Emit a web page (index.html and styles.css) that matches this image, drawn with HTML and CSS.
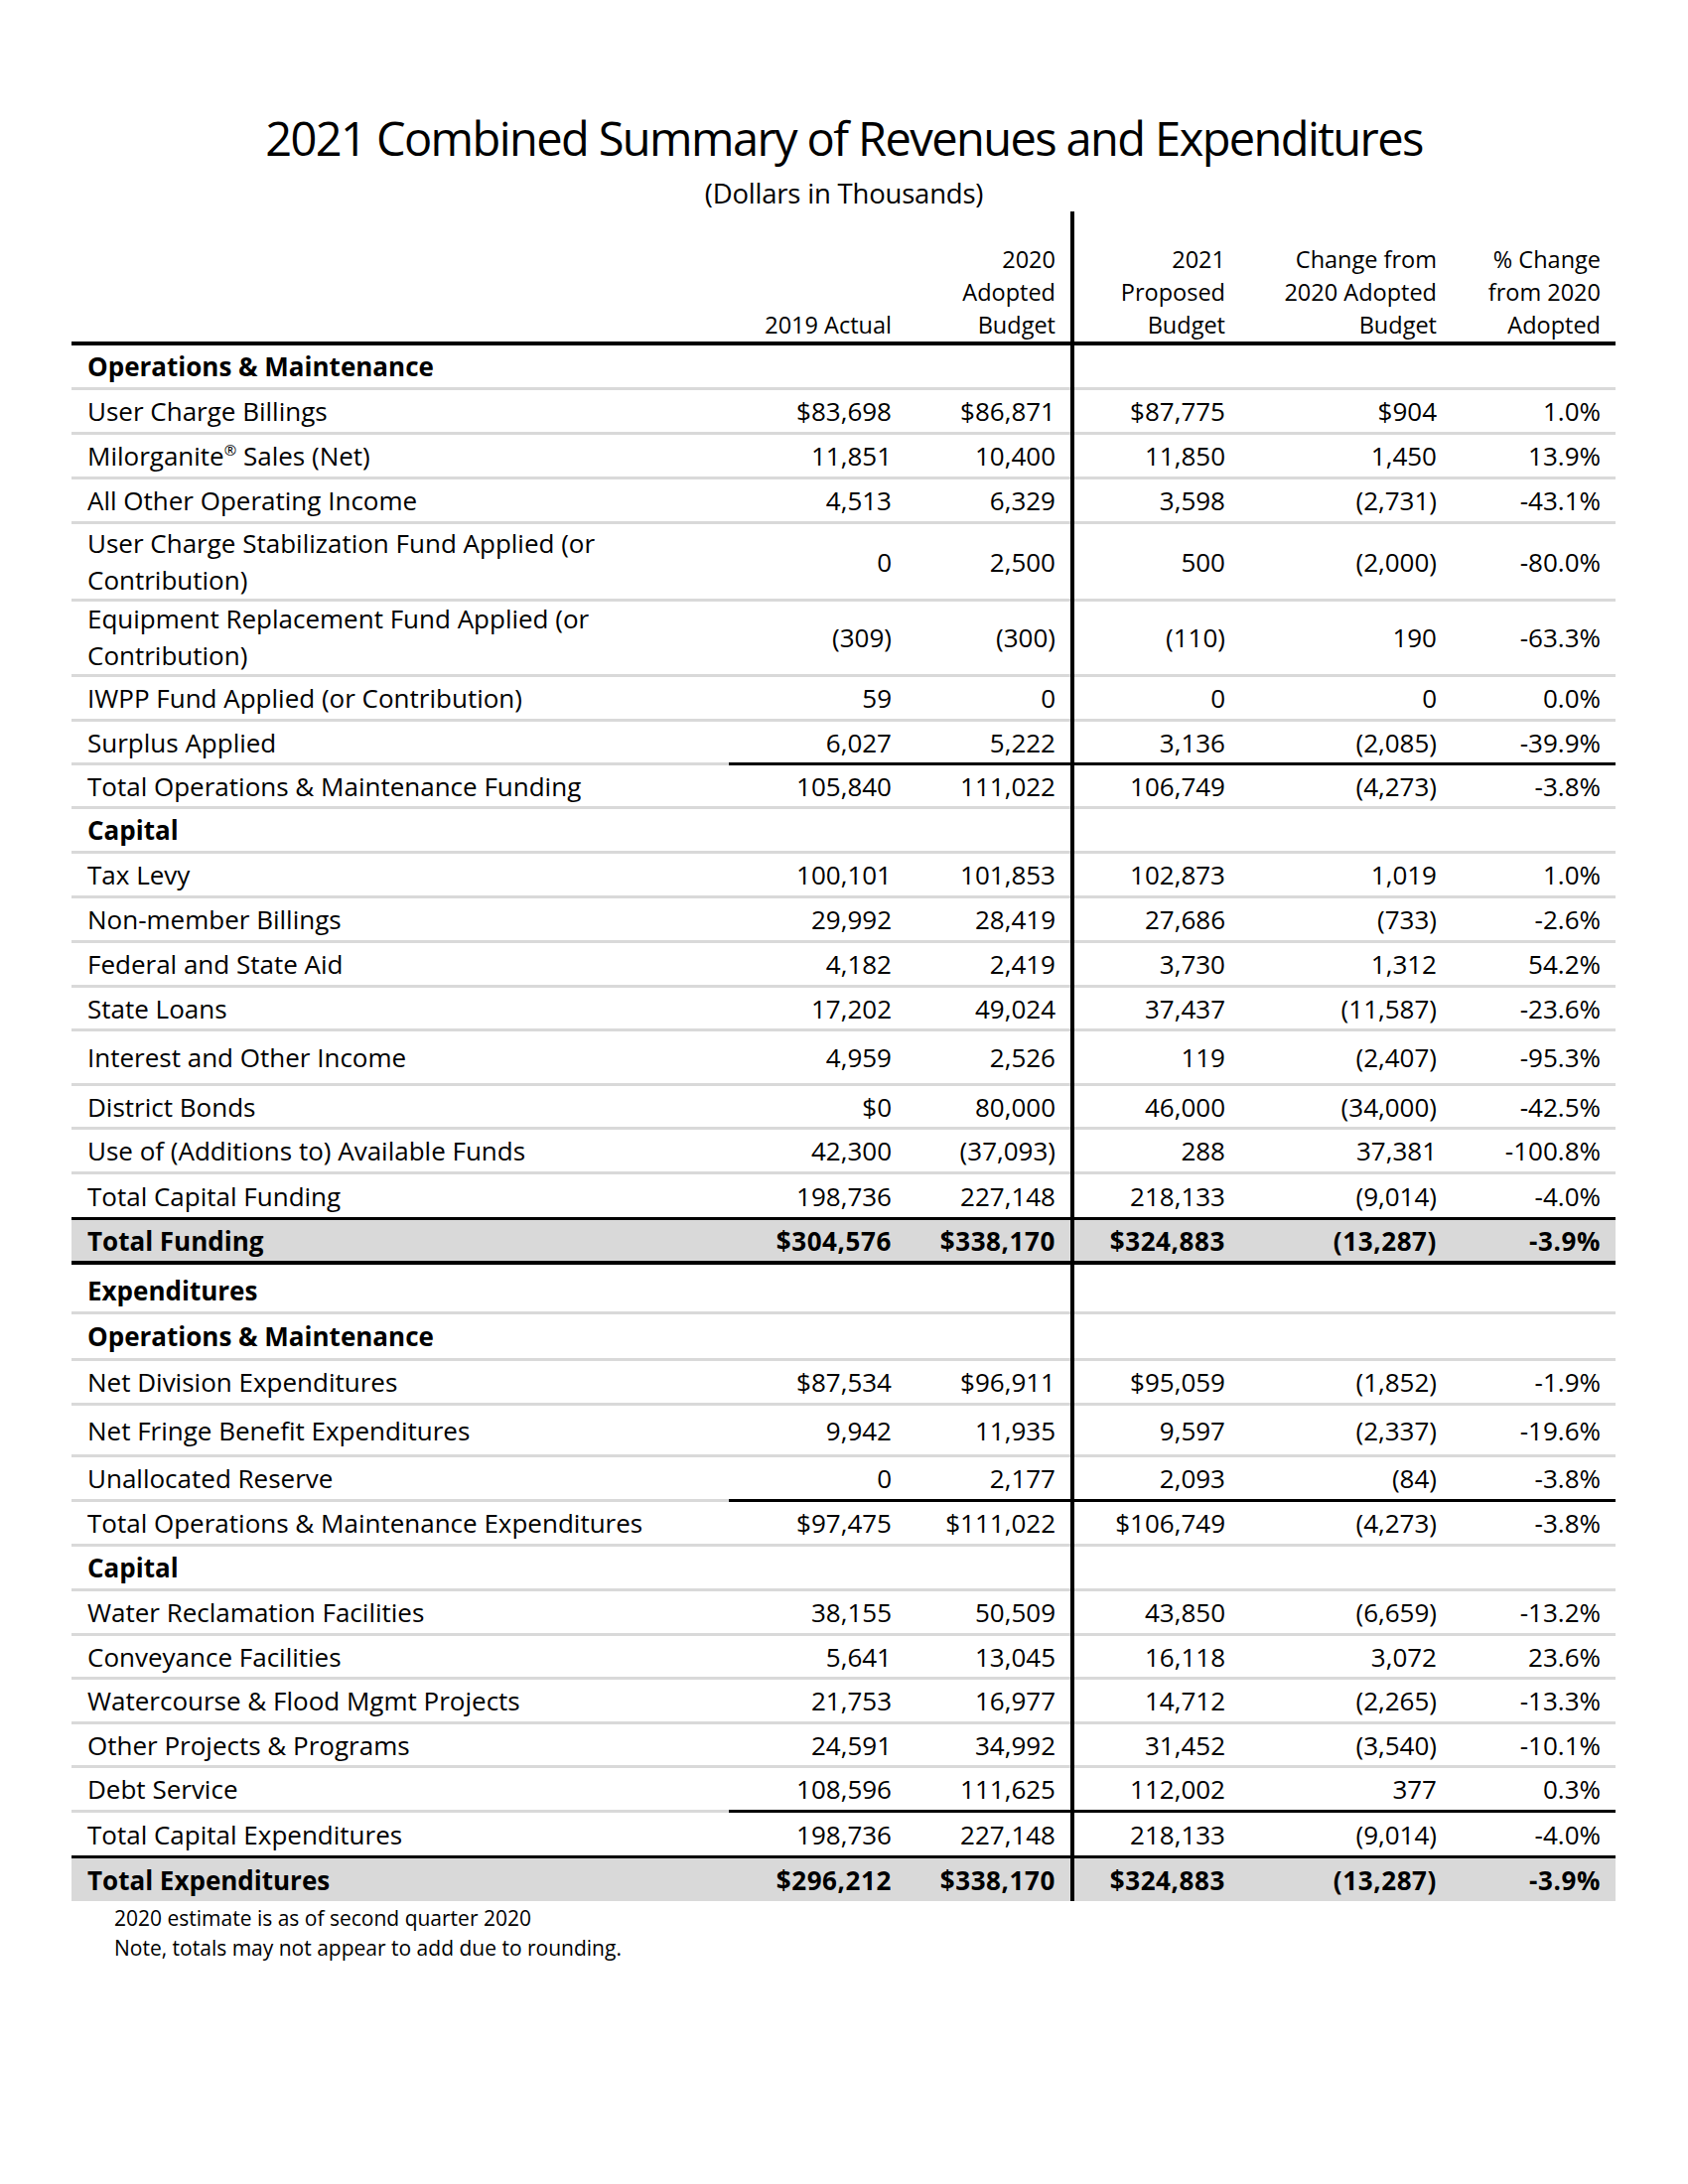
FILE: index.html
```html
<!DOCTYPE html>
<html lang="en">
<head>
<meta charset="utf-8">
<title>2021 Combined Summary of Revenues and Expenditures</title>
<link rel="stylesheet" href="styles.css">
</head>
<body>
<div class="page">
  <h1 class="title">2021 Combined Summary of Revenues and Expenditures</h1>
  <p class="subtitle">(Dollars in Thousands)</p>

  <div class="sheet">
    <div class="row head">
      <div class="c lbl"></div>
      <div class="c"><div class="ht">2019 Actual</div></div>
      <div class="c"><div class="ht">2020<br>Adopted<br>Budget</div></div>
      <div class="c v3"><div class="ht">2021<br>Proposed<br>Budget</div></div>
      <div class="c"><div class="ht">Change from<br>2020 Adopted<br>Budget</div></div>
      <div class="c"><div class="ht">% Change<br>from 2020<br>Adopted</div></div>
    </div>

    <div class="row sec"><div class="c lbl"><span>Operations &amp; Maintenance</span></div><div class="c"></div><div class="c"></div><div class="c v3"></div><div class="c"></div><div class="c"></div></div>
    <div class="row"><div class="c lbl"><span>User Charge Billings</span></div><div class="c">$83,698</div><div class="c">$86,871</div><div class="c v3">$87,775</div><div class="c">$904</div><div class="c">1.0%</div></div>
    <div class="row"><div class="c lbl"><span>Milorganite<sup class="reg">®</sup> Sales (Net)</span></div><div class="c">11,851</div><div class="c">10,400</div><div class="c v3">11,850</div><div class="c">1,450</div><div class="c">13.9%</div></div>
    <div class="row"><div class="c lbl"><span>All Other Operating Income</span></div><div class="c">4,513</div><div class="c">6,329</div><div class="c v3">3,598</div><div class="c">(2,731)</div><div class="c">-43.1%</div></div>
    <div class="row h76"><div class="c lbl"><span>User Charge Stabilization Fund Applied (or Contribution)</span></div><div class="c">0</div><div class="c">2,500</div><div class="c v3">500</div><div class="c">(2,000)</div><div class="c">-80.0%</div></div>
    <div class="row h77"><div class="c lbl"><span>Equipment Replacement Fund Applied (or Contribution)</span></div><div class="c">(309)</div><div class="c">(300)</div><div class="c v3">(110)</div><div class="c">190</div><div class="c">-63.3%</div></div>
    <div class="row h46"><div class="c lbl"><span>IWPP Fund Applied (or Contribution)</span></div><div class="c">59</div><div class="c">0</div><div class="c v3">0</div><div class="c">0</div><div class="c">0.0%</div></div>
    <div class="row h44 ul"><div class="c lbl"><span>Surplus Applied</span></div><div class="c">6,027</div><div class="c">5,222</div><div class="c v3">3,136</div><div class="c">(2,085)</div><div class="c">-39.9%</div></div>
    <div class="row h44"><div class="c lbl"><span>Total Operations &amp; Maintenance Funding</span></div><div class="c">105,840</div><div class="c">111,022</div><div class="c v3">106,749</div><div class="c">(4,273)</div><div class="c">-3.8%</div></div>

    <div class="row sec"><div class="c lbl"><span>Capital</span></div><div class="c"></div><div class="c"></div><div class="c v3"></div><div class="c"></div><div class="c"></div></div>
    <div class="row"><div class="c lbl"><span>Tax Levy</span></div><div class="c">100,101</div><div class="c">101,853</div><div class="c v3">102,873</div><div class="c">1,019</div><div class="c">1.0%</div></div>
    <div class="row"><div class="c lbl"><span>Non-member Billings</span></div><div class="c">29,992</div><div class="c">28,419</div><div class="c v3">27,686</div><div class="c">(733)</div><div class="c">-2.6%</div></div>
    <div class="row"><div class="c lbl"><span>Federal and State Aid</span></div><div class="c">4,182</div><div class="c">2,419</div><div class="c v3">3,730</div><div class="c">1,312</div><div class="c">54.2%</div></div>
    <div class="row h44"><div class="c lbl"><span>State Loans</span></div><div class="c">17,202</div><div class="c">49,024</div><div class="c v3">37,437</div><div class="c">(11,587)</div><div class="c">-23.6%</div></div>
    <div class="row h55"><div class="c lbl"><span>Interest and Other Income</span></div><div class="c">4,959</div><div class="c">2,526</div><div class="c v3">119</div><div class="c">(2,407)</div><div class="c">-95.3%</div></div>
    <div class="row h44"><div class="c lbl"><span>District Bonds</span></div><div class="c">$0</div><div class="c">80,000</div><div class="c v3">46,000</div><div class="c">(34,000)</div><div class="c">-42.5%</div></div>
    <div class="row"><div class="c lbl"><span>Use of (Additions to) Available Funds</span></div><div class="c">42,300</div><div class="c">(37,093)</div><div class="c v3">288</div><div class="c">37,381</div><div class="c">-100.8%</div></div>
    <div class="row h46 ulfull"><div class="c lbl"><span>Total Capital Funding</span></div><div class="c">198,736</div><div class="c">227,148</div><div class="c v3">218,133</div><div class="c">(9,014)</div><div class="c">-4.0%</div></div>
    <div class="row grand"><div class="c lbl"><span>Total Funding</span></div><div class="c">$304,576</div><div class="c">$338,170</div><div class="c v3">$324,883</div><div class="c">(13,287)</div><div class="c">-3.9%</div></div>

    <div class="row sec h50"><div class="c lbl"><span>Expenditures</span></div><div class="c"></div><div class="c"></div><div class="c v3"></div><div class="c"></div><div class="c"></div></div>
    <div class="row sec h47"><div class="c lbl"><span>Operations &amp; Maintenance</span></div><div class="c"></div><div class="c"></div><div class="c v3"></div><div class="c"></div><div class="c"></div></div>
    <div class="row"><div class="c lbl"><span>Net Division Expenditures</span></div><div class="c">$87,534</div><div class="c">$96,911</div><div class="c v3">$95,059</div><div class="c">(1,852)</div><div class="c">-1.9%</div></div>
    <div class="row h52"><div class="c lbl"><span>Net Fringe Benefit Expenditures</span></div><div class="c">9,942</div><div class="c">11,935</div><div class="c v3">9,597</div><div class="c">(2,337)</div><div class="c">-19.6%</div></div>
    <div class="row ul"><div class="c lbl"><span>Unallocated Reserve</span></div><div class="c">0</div><div class="c">2,177</div><div class="c v3">2,093</div><div class="c">(84)</div><div class="c">-3.8%</div></div>
    <div class="row"><div class="c lbl"><span>Total Operations &amp; Maintenance Expenditures</span></div><div class="c">$97,475</div><div class="c">$111,022</div><div class="c v3">$106,749</div><div class="c">(4,273)</div><div class="c">-3.8%</div></div>

    <div class="row sec"><div class="c lbl"><span>Capital</span></div><div class="c"></div><div class="c"></div><div class="c v3"></div><div class="c"></div><div class="c"></div></div>
    <div class="row"><div class="c lbl"><span>Water Reclamation Facilities</span></div><div class="c">38,155</div><div class="c">50,509</div><div class="c v3">43,850</div><div class="c">(6,659)</div><div class="c">-13.2%</div></div>
    <div class="row h44"><div class="c lbl"><span>Conveyance Facilities</span></div><div class="c">5,641</div><div class="c">13,045</div><div class="c v3">16,118</div><div class="c">3,072</div><div class="c">23.6%</div></div>
    <div class="row"><div class="c lbl"><span>Watercourse &amp; Flood Mgmt Projects</span></div><div class="c">21,753</div><div class="c">16,977</div><div class="c v3">14,712</div><div class="c">(2,265)</div><div class="c">-13.3%</div></div>
    <div class="row h44"><div class="c lbl"><span>Other Projects &amp; Programs</span></div><div class="c">24,591</div><div class="c">34,992</div><div class="c v3">31,452</div><div class="c">(3,540)</div><div class="c">-10.1%</div></div>
    <div class="row ul"><div class="c lbl"><span>Debt Service</span></div><div class="c">108,596</div><div class="c">111,625</div><div class="c v3">112,002</div><div class="c">377</div><div class="c">0.3%</div></div>
    <div class="row h46 ulfull"><div class="c lbl"><span>Total Capital Expenditures</span></div><div class="c">198,736</div><div class="c">227,148</div><div class="c v3">218,133</div><div class="c">(9,014)</div><div class="c">-4.0%</div></div>
    <div class="row grand last h43"><div class="c lbl"><span>Total Expenditures</span></div><div class="c">$296,212</div><div class="c">$338,170</div><div class="c v3">$324,883</div><div class="c">(13,287)</div><div class="c">-3.9%</div></div>
  </div>

  <div class="notes">
    <p>2020 estimate is as of second quarter 2020</p>
    <p>Note, totals may not appear to add due to rounding.</p>
  </div>
</div>
</body>
</html>
```

FILE: styles.css
```css
html, body {
  margin: 0;
  padding: 0;
  background: #ffffff;
}

body {
  color: #000000;
  font-family: "Open Sans", "Noto Sans", sans-serif;
}

.page {
  width: 1700px;
  height: 2200px;
  box-sizing: border-box;
  padding-top: 109px;
}

.title {
  margin: 0;
  text-align: center;
  font-size: 47px;
  font-weight: 400;
  line-height: 60px;
  letter-spacing: -1.6px;
}

.subtitle {
  margin: 9px 0 0;
  text-align: center;
  font-size: 27.5px;
  line-height: 33px;
  letter-spacing: -0.2px;
}

.sheet {
  margin: 2px 0 0 72px;
  width: 1555px;
}

.row {
  display: grid;
  grid-template-columns: 662px 179px 165px 171px 213px 165px;
  height: 45px;
  font-size: 26px;
  line-height: 37px;
}

.h43 { height: 43px; }
.h44 { height: 44px; }
.h46 { height: 46px; }
.h47 { height: 47px; }
.h50 { height: 50px; }
.h52 { height: 52px; }
.h55 { height: 55px; }
.h76 { height: 76px; }
.h77 { height: 77px; }

.c {
  box-sizing: border-box;
  display: flex;
  align-items: center;
  justify-content: flex-end;
  text-align: right;
  padding: 1px 15px 3px 0;
  white-space: nowrap;
  box-shadow: inset 0 -3px 0 #d9d9d9;
}

.c.lbl {
  justify-content: flex-start;
  text-align: left;
  padding-left: 16px;
  padding-right: 0;
  white-space: normal;
}

.c.v3 {
  border-left: 4px solid #000000;
}

.reg {
  font-size: 15px;
  line-height: 0;
  vertical-align: 10px;
}

/* header */
.row.head {
  height: 135px;
  font-size: 23.5px;
  line-height: 33px;
}

.head .c {
  align-items: flex-end;
  padding-top: 0;
  padding-bottom: 4px;
  box-shadow: inset 0 -4px 0 #000000;
}

.ht {
  text-align: right;
}

/* section headings */
.sec .lbl {
  font-weight: 700;
}

.sec.h50 .lbl {
  padding-top: 6px;
}

/* rule under values before a subtotal */
.ul .c:not(.lbl) {
  box-shadow: inset 0 -3px 0 #000000;
}

.ulfull .c {
  box-shadow: inset 0 -3px 0 #000000;
}

/* grand totals */
.grand {
  font-weight: 700;
}

.grand .c {
  background: #d9d9d9;
  padding-bottom: 4px;
  box-shadow: inset 0 -4px 0 #000000;
}

.grand .c:not(.lbl) {
  letter-spacing: 0.6px;
}

.grand.last .c {
  padding-bottom: 0;
  box-shadow: none;
}

/* footnotes */
.notes {
  margin: 2px 0 0 115px;
  font-size: 21px;
  line-height: 30px;
}

.notes p {
  margin: 0;
}
```
